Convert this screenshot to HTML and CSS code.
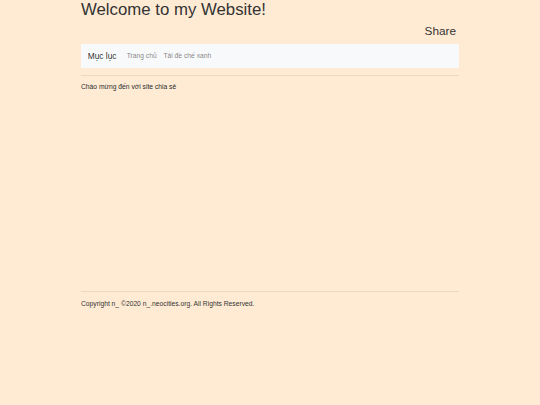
FILE: index.html
```html
<!DOCTYPE html>
<html lang="vi">
<head>
<meta charset="utf-8">
<title>Welcome to my Website!</title>
<link rel="stylesheet" href="styles.css">
</head>
<body>
<div class="container">
  <header class="site-header">
    <h1 class="site-title">Welcome to my Website!</h1>
    <h3 class="share">Share</h3>
  </header>
  <nav class="navbar">
    <a class="brand" href="#">Mục lục</a>
    <ul class="nav">
      <li><a class="nav-link" href="#">Trang chủ</a></li>
      <li><a class="nav-link" href="#">Tải đề chế xanh</a></li>
    </ul>
  </nav>
  <hr class="rule">
  <main class="content">
    <p class="intro">Chào mừng đến với site chia sẻ</p>
  </main>
  <hr class="rule">
  <footer class="footer">
    <p class="copy">Copyright n_ ©2020 n_.neocities.org. All Rights Reserved.</p>
  </footer>
</div>
</body>
</html>
```

FILE: styles.css
```css
html, body {
  margin: 0;
  padding: 0;
}
body {
  background: #ffebd4;
  color: #2a2c2f;
  font-family: "Liberation Sans", Arial, sans-serif;
  font-size: 6.72px;
  line-height: 1.5;
}
.container {
  width: 378px;
  margin: 0 auto;
}
.site-header {
  display: flex;
  flex-direction: column;
}
.site-title {
  margin: 0 0 3.4px;
  font-size: 16.8px;
  font-weight: 400;
  line-height: 1.2;
  color: #333;
}
.share {
  margin: 0 3px 6.4px 0;
  align-self: flex-end;
  font-size: 11.8px;
  font-weight: 400;
  line-height: 1.2;
  color: #333;
}
.navbar {
  display: flex;
  align-items: center;
  background: #f8f9fa;
  padding: 3.4px 6.7px;
  height: 24px;
  box-sizing: border-box;
}
.brand {
  font-size: 8.4px;
  line-height: 12.6px;
  color: rgba(0,0,0,.85);
  text-decoration: none;
  margin-right: 6.7px;
}
.nav {
  display: flex;
  list-style: none;
  margin: 0;
  padding: 0;
}
.nav-link {
  display: block;
  padding: 0 3.4px;
  color: rgba(0,0,0,.5);
  text-decoration: none;
}
.rule {
  margin: 6.7px 0;
  border: 0;
  border-top: 1px solid rgba(0,0,0,.08);
}
.content {
  height: 202px;
}
.intro, .copy {
  margin: 0;
}
.footer {
  color: #333;
}
```
